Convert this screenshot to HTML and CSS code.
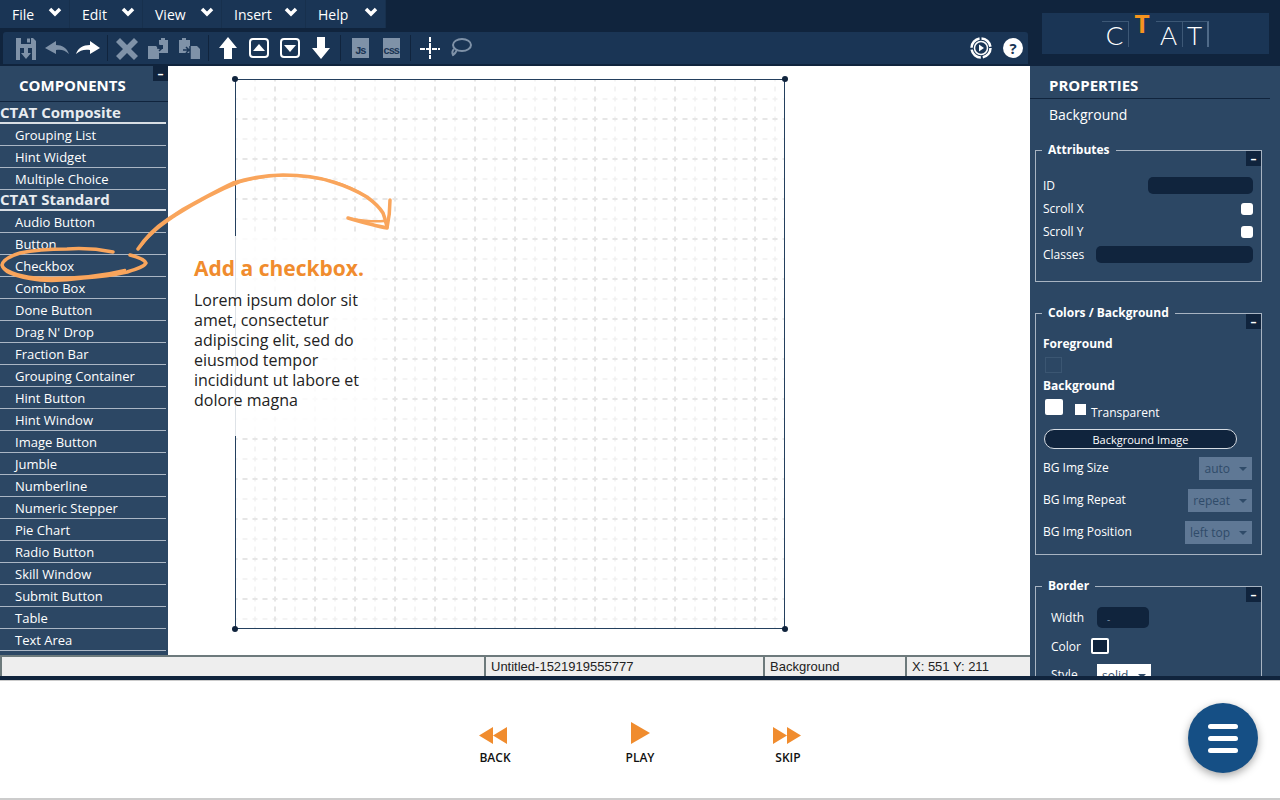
FILE: index.html
```html
<!DOCTYPE html>
<html lang="en">
<head>
  <meta charset="UTF-8" />
  <title>CTAT Tutorial</title>
  <link rel="stylesheet" href="styles.css">
</head>
<body>

  <div class="app">
    <header class="top">
      <div class="bars">
        <nav class="menu">
          <a class="menu-item w-file">File <svg viewBox="0 0 14 10"><path d="M2 2l5 5 5-5" /></svg></a>
          <a class="menu-item w-edit">Edit <svg viewBox="0 0 14 10"><path d="M2 2l5 5 5-5" /></svg></a>
          <a class="menu-item w-view">View <svg viewBox="0 0 14 10"><path d="M2 2l5 5 5-5" /></svg></a>
          <a class="menu-item w-insert">Insert <svg viewBox="0 0 14 10"><path d="M2 2l5 5 5-5" /></svg></a>
          <a class="menu-item w-help">Help <svg viewBox="0 0 14 10"><path d="M2 2l5 5 5-5" /></svg></a>
        </nav>

        <div class="toolbar">
          <div class="tools">
            <svg class="off" viewBox="0 0 24 24"><path d="M2 2h17l3 3v19H2z" /><path class="hole" d="M7 2h10v6H7zM6 12h12v12H6z" /><path d="M13 2.500h3v4h-3zM10 12h4v5h3l-5 6-5-6h3z" /></svg>
            <svg class="off" viewBox="0 0 24 24"><path d="M11 5L0 12l11 6v-4c5-1 9 0 13 4-2-6-7-9-13-9z" /></svg>
            <svg viewBox="0 0 24 24"><path d="M14 5l10 7-10 6v-4C9 13 4 14 0 18 2 12 7 9 14 9z" /></svg>
          </div>
          <div class="tools">
            <svg class="off" viewBox="0 0 24 24"><path d="M5 2l7 7 7-7 4 4-7 7 7 7-4 4-7-7-7 7-4-4 7-7-7-7z" /></svg>
            <svg class="off" viewBox="0 0 24 24"><path d="M13 4h2V2h4v2h3v13H13z" /><path class="hole" d="M11 9h6v4h-6z" /><path d="M2 10h8l3 3v10H2z" /><path class="cut" d="M11 12l3 0M13 9l3 3-3 3" /></svg>
            <svg class="off" viewBox="0 0 24 24"><path d="M2 4h3V2h4v2h4v13H2z" /><path d="M13 10h7l3 3v10H13z" /><path class="cut" d="M6 14h5M9 11l3 3-3 3M13 10v13" /></svg>
          </div>
          <div class="tools">
            <svg viewBox="0 0 24 24"><path d="M12 1l9 11h-5v11H8V12H3z" /></svg>
            <svg viewBox="0 0 24 24"><rect class="frame" x="3" y="3" width="18" height="18" rx="3" /><path d="M12 8l6 7H6z" /></svg>
            <svg viewBox="0 0 24 24"><rect class="frame" x="3" y="3" width="18" height="18" rx="3" /><path d="M12 16l6-7H6z" /></svg>
            <svg viewBox="0 0 24 24"><path d="M12 23l9-11h-5V1H8v11H3z" /></svg>
          </div>
          <div class="tools">
            <span class="file-icon">Js</span>
            <span class="file-icon">css</span>
          </div>
          <div class="tools">
            <svg viewBox="0 0 24 24"><path class="line" d="M2 13h20M12 1v22" stroke-dasharray="5 1" /></svg>
            <svg class="off" viewBox="0 0 24 24"><ellipse class="ring" cx="13" cy="9" rx="9" ry="6" /><path class="ring" d="M8 14c-1 2-2 4-4 5-1-2-1-4 1-6" /></svg>
          </div>
          <div class="toolbar-right">
            <svg viewBox="0 0 24 24"><circle class="ring" cx="12" cy="12" r="9.500" stroke-dasharray="13 2" /><circle cx="12" cy="12" r="6.500" class="ring-thin" /><path d="M10 8.500l5 3.500-5 3.500z" /></svg>
            <span class="help">?</span>
          </div>
        </div>
      </div>

      <div class="logo">
        <span class="logo-cell">C</span>
        <span class="logo-t">T</span>
        <span class="logo-cell">A</span>
        <span class="logo-cell logo-last">T</span>
      </div>
    </header>

    <div class="main">
      <div class="center">
        <div class="center-row">
          <aside class="components">
            <span class="collapse collapse-side">–</span>
            <h2 class="panel-title">COMPONENTS</h2>
            <h3 class="list-head">CTAT Composite</h3>
            <a class="list-item">Grouping List</a>
            <a class="list-item">Hint Widget</a>
            <a class="list-item">Multiple Choice</a>
            <h3 class="list-head list-head-2">CTAT Standard</h3>
            <a class="list-item">Audio Button</a>
            <a class="list-item">Button</a>
            <a class="list-item">Checkbox</a>
            <a class="list-item">Combo Box</a>
            <a class="list-item">Done Button</a>
            <a class="list-item">Drag N' Drop</a>
            <a class="list-item">Fraction Bar</a>
            <a class="list-item">Grouping Container</a>
            <a class="list-item">Hint Button</a>
            <a class="list-item">Hint Window</a>
            <a class="list-item">Image Button</a>
            <a class="list-item">Jumble</a>
            <a class="list-item">Numberline</a>
            <a class="list-item">Numeric Stepper</a>
            <a class="list-item">Pie Chart</a>
            <a class="list-item">Radio Button</a>
            <a class="list-item">Skill Window</a>
            <a class="list-item">Submit Button</a>
            <a class="list-item">Table</a>
            <a class="list-item">Text Area</a>
          </aside>

          <section class="workspace">
            <div class="stage">
              <svg class="grid" width="548" height="548">
                <defs>
                  <pattern id="tile" x="-1" y="-1" width="40" height="40" patternUnits="userSpaceOnUse">
                    <path class="minor" d="M0 20h40M20 0v40" />
                    <path class="major" d="M0 40h40M0 0h40M40 0v40M0 0v40" />
                  </pattern>
                </defs>
                <rect width="548" height="548" fill="url(#tile)" />
              </svg>
              <i class="handle h-tl"></i>
              <i class="handle h-tr"></i>
              <i class="handle h-bl"></i>
              <i class="handle h-br"></i>
            </div>

            <div class="callout">
              <h4>Add a checkbox.</h4>
              <p>Lorem ipsum dolor sit amet, consectetur adipiscing elit, sed do eiusmod tempor incididunt ut labore et dolore magna</p>
            </div>
          </section>
        </div>

        <footer class="status">
          <span class="cell cell-1"></span>
          <span class="cell cell-2">Untitled-1521919555777</span>
          <span class="cell cell-3">Background</span>
          <span class="cell cell-4">X: 551 Y: 211</span>
        </footer>
      </div>

      <aside class="properties">
        <h2 class="panel-title props-title">PROPERTIES</h2>
        <div class="props-name">Background</div>

        <fieldset class="group group-attr">
          <legend>Attributes</legend>
          <span class="collapse">–</span>
          <div class="row"><span>ID</span><i class="field field-id"></i></div>
          <div class="row"><span>Scroll X</span><i class="check"></i></div>
          <div class="row"><span>Scroll Y</span><i class="check"></i></div>
          <div class="row"><span>Classes</span><i class="field field-classes"></i></div>
        </fieldset>

        <fieldset class="group group-colors">
          <legend>Colors / Background</legend>
          <span class="collapse">–</span>
          <div class="sub">Foreground</div>
          <i class="swatch swatch-fg"></i>
          <div class="sub sub-bg">Background</div>
          <div class="bg-row">
            <i class="swatch swatch-bg"></i>
            <i class="tick"></i>
            <span>Transparent</span>
          </div>
          <button class="pill" type="button">Background Image</button>
          <div class="row row-select"><span class="select-label">BG Img Size</span><span class="select">auto</span></div>
          <div class="row row-select"><span class="select-label">BG Img Repeat</span><span class="select">repeat</span></div>
          <div class="row row-select"><span class="select-label">BG Img Position</span><span class="select">left top</span></div>
        </fieldset>

        <fieldset class="group group-border">
          <legend>Border</legend>
          <span class="collapse">–</span>
          <div class="border-row"><span class="border-label">Width</span><i class="field field-width">-</i></div>
          <div class="border-row border-row-color"><span class="border-label">Color</span><i class="swatch-dark"></i></div>
          <div class="border-row border-row-style"><span class="border-label">Style</span><span class="select select-white">solid</span></div>
        </fieldset>
      </aside>
    </div>
  </div>

  <div class="player">
    <a class="ctrl ctrl-back">
      <svg width="28" height="17" viewBox="0 0 28 17"><path d="M14 0v17L0 8.500zM28 0v17L14 8.500z" /></svg>
      <span>BACK</span>
    </a>
    <a class="ctrl ctrl-play">
      <svg width="19" height="22" viewBox="0 0 19 22"><path d="M0 0l19 11L0 22z" /></svg>
      <span>PLAY</span>
    </a>
    <a class="ctrl ctrl-skip">
      <svg width="28" height="17" viewBox="0 0 28 17"><path d="M0 0v17l14-8.500zM14 0v17l14-8.500z" /></svg>
      <span>SKIP</span>
    </a>
    <button class="burger" type="button"><i></i><i></i><i></i></button>
  </div>

  <svg class="scribble" width="400" height="290" viewBox="0 0 400 290">
    <path d="M138 249C146 237 155 228 167 220C178 212 188 206 200 200C211 194 222 188 233 183C250 178 266 175 283 175C300 175 318 177 333 182C346 186 357 191 367 197C375 203 380 208 383 213C385 218 386 223 387 227" />
    <path class="rough" d="M140 247C150 233 162 225 175 216C195 203 215 192 240 182C262 176 285 173 310 177C335 180 355 188 372 201" />
    <path d="M348 218C362 222 376 226 387 228C389 219 390 209 390 200" />
    <path class="rough" d="M352 219C364 221 374 222 384 221" />
    <path d="M113 252C98 249 82 248 67 249C50 249 34 250 20 253C10 256 3 260 2 265C3 269 6 271 10 273C19 277 29 279 40 280C54 281 69 280 83 278C99 277 114 275 127 272C137 269 144 267 146 263C145 260 138 257 130 255" />
    <path class="rough" d="M4 268C14 275 30 278 50 278C75 278 105 275 125 270" />
  </svg>

</body>
</html>
```

FILE: styles.css
```css
* {
  box-sizing: border-box;
}

body {
  font-family: "Open Sans", Arial, sans-serif;
  margin: 0;
  height: 800px;
  overflow: hidden;
  background-color: white;
  position: relative;
}

.app {
  height: 681px;
  background-color: #10243d;
  border-bottom: 1px solid #ccc;
  display: flex;
  flex-direction: column;
}

/* top bars */
.top {
  height: 66px;
  display: flex;
  flex: none;
}

.bars {
  width: 1028px;
}

.menu {
  width: 386px;
  height: 28px;
  background-color: #1a3555;
  display: flex;
}

.menu-item {
  color: white;
  font-size: 14px;
  padding: 0 7px 0 12px;
  display: flex;
  align-items: center;
  justify-content: space-between;
  border-right: 1px solid #17304d;
}

.menu-item svg {
  width: 14px;
  height: 10px;
  margin-top: -4px;
  fill: none;
  stroke: white;
  stroke-width: 3.500;
}

.w-file { width: 70px; }
.w-edit { width: 73px; }
.w-view { width: 79px; }
.w-insert { width: 84px; }
.w-help { width: 80px; }

.toolbar {
  margin: 4px 0 0 3px;
  height: 32px;
  background-color: #1a3555;
  display: flex;
  align-items: center;
  padding-left: 11px;
  border-radius: 3px 3px 0 0;
}

.tools {
  display: flex;
  gap: 7px;
  align-items: center;
  padding-right: 7px;
  margin-right: 7px;
  border-right: 1px solid #10243d;
  height: 26px;
}

.tools:nth-child(5) {
  border-right: none;
}

.tools svg,
.toolbar-right svg {
  width: 24px;
  height: 24px;
  fill: white;
}

.tools svg.off {
  fill: #7f92a8;
}

.tools svg .hole {
  fill: #1a3555;
}

.cut {
  fill: none;
  stroke: #1a3555;
  stroke-width: 1.500;
}

.frame {
  fill: #1a3555;
  stroke: white;
  stroke-width: 2;
}

.line {
  fill: none;
  stroke: white;
  stroke-width: 2;
}

.ring {
  fill: none;
  stroke: #7f92a8;
  stroke-width: 2;
}

.toolbar-right .ring {
  stroke: white;
  stroke-width: 2.500;
}

.ring-thin {
  fill: none;
  stroke: white;
  stroke-width: 1.500;
}

.file-icon {
  width: 17px;
  height: 20px;
  margin: 0 3.500px;
  background-color: #7f92a8;
  color: #1a3555;
  font: bold 11px "Liberation Mono", monospace;
  line-height: 26px;
  text-align: center;
  letter-spacing: -1.500px;
}

.toolbar-right {
  margin-left: auto;
  margin-right: 5px;
  display: flex;
  align-items: center;
  gap: 10px;
}

.help {
  width: 20px;
  height: 20px;
  border-radius: 50%;
  background-color: white;
  color: #1a3555;
  font-weight: bold;
  font-size: 15px;
  line-height: 20px;
  text-align: center;
}

.logo {
  margin: 13px 0 0 14px;
  width: 227px;
  height: 41px;
  background-color: #1a3555;
  display: flex;
  justify-content: center;
  align-items: flex-end;
  padding: 0 1px 7px 0;
  color: white;
  font-family: Lato, sans-serif;
  font-weight: 300;
  font-size: 26px;
  line-height: 26px;
}

.logo-cell {
  width: 27px;
  height: 26px;
  text-align: center;
  border-right: 1px solid #3d5876;
  border-top: 1px solid #3d5876;
}

.logo-last {
  border-right: 2px solid #4f6a88;
  width: 26px;
}

.logo-t {
  width: 27px;
  height: 26px;
  color: #f7941e;
  font-weight: 900;
  font-size: 25px;
  line-height: 14px;
  text-align: center;
  align-self: flex-start;
  padding-top: 3px;
}

/* main area */
.main {
  flex: 1;
  display: flex;
  min-height: 0;
}

.center {
  width: 1030px;
  height: 610px;
  display: flex;
  flex-direction: column;
}

.center-row {
  height: 589px;
  display: flex;
}

.components {
  width: 168px;
  background-color: #2c4764;
  color: white;
  overflow: hidden;
  position: relative;
}

.panel-title {
  margin: 0;
  font-size: 15px;
  font-weight: bold;
  line-height: 20px;
}

.components .panel-title {
  height: 36px;
  padding: 9px 0 0 19px;
  border-bottom: 1px solid #10243d;
}

.list-head {
  margin: 0 2px 0 0;
  height: 22px;
  font-size: 15px;
  font-weight: bold;
  line-height: 20px;
  color: #e8ecf0;
  border-bottom: 2px solid #d8dee4;
}

.list-head-2 {
  height: 21px;
  line-height: 18px;
}

.list-item {
  display: block;
  height: 22px;
  margin-right: 2px;
  padding-left: 15px;
  font-size: 13px;
  line-height: 22px;
  border-bottom: 1px solid #aab6c4;
}

.collapse {
  position: absolute;
  top: 1px;
  right: 1px;
  width: 15px;
  height: 15px;
  background-color: #10243d;
  color: white;
  font-size: 12px;
  font-weight: bold;
  line-height: 15px;
  text-align: center;
}

.collapse-side {
  top: 0;
  right: 0;
}

.workspace {
  flex: 1;
  background-color: white;
  padding: 13px 0 0 67px;
  position: relative;
}

.stage {
  width: 550px;
  height: 550px;
  border: 1px solid #24405e;
  position: relative;
}

.grid {
  display: block;
}

.minor {
  fill: none;
  stroke: #f1f1f1;
  stroke-width: 1.500;
  stroke-dasharray: 5 5;
  stroke-dashoffset: 2.500;
}

.major {
  fill: none;
  stroke: #e6e6e6;
  stroke-width: 2;
  stroke-dasharray: 5 5;
  stroke-dashoffset: 2.500;
}

.handle {
  position: absolute;
  width: 6px;
  height: 6px;
  border-radius: 50%;
  background-color: #10243d;
}

.h-tl { top: -4px; left: -4px; }
.h-tr { top: -4px; right: -4px; }
.h-bl { bottom: -4px; left: -4px; }
.h-br { bottom: -4px; right: -4px; }

.callout {
  position: absolute;
  top: 170px;
  left: 0;
  width: 226px;
  height: 200px;
  padding: 19px 30px 0 26px;
  background: linear-gradient(to right, rgba(255,255,255,0.85) 88%, rgba(255,255,255,0));
}

.callout h4 {
  margin: 0 0 9px;
  font-size: 21px;
  line-height: 26px;
  font-weight: bold;
  color: #f08c2e;
}

.callout p {
  margin: 0;
  font-size: 16px;
  line-height: 20px;
  color: #222;
}

.status {
  height: 21px;
  display: flex;
  background-color: #eee;
  border-top: 2px solid #6d7a7c;
  font-family: "Liberation Sans", Arial, sans-serif;
  font-size: 13px;
  line-height: 20px;
  color: #222;
}

.cell {
  padding-left: 5px;
  border-left: 2px solid #6d7a7c;
}

.cell-1 { width: 484px; }
.cell-2 { width: 279px; }
.cell-3 { width: 142px; }
.cell-4 { width: 125px; }

.properties {
  width: 250px;
  height: 610px;
  overflow: hidden;
  background-color: #2c4764;
  color: white;
  font-size: 12px;
}

.props-title {
  width: 240px;
  height: 33px;
  padding: 9px 0 0 19px;
  border-bottom: 1px solid #10243d;
}

.props-name {
  height: 29px;
  padding-left: 19px;
  font-size: 14px;
  line-height: 32px;
}

.group {
  position: relative;
  margin: 14px 0 0 5px;
  width: 227px;
  padding: 0 8px 0 7px;
  border: 1px solid #a8b4c2;
  min-width: 0;
}

.group legend {
  margin-left: -1px;
  padding: 0 6px;
  font-size: 12px;
  font-weight: bold;
  line-height: 16px;
}

.group .collapse {
  top: -7px;
  right: 0;
}

.group-attr {
  height: 140px;
  padding-top: 16px;
}

.group-colors {
  margin-top: 23px;
  height: 250px;
  padding-top: 14px;
}

.group-border {
  margin-top: 23px;
  height: 200px;
  padding-top: 13px;
}

.row {
  height: 23px;
  display: flex;
  justify-content: space-between;
  align-items: center;
}

.field {
  display: block;
  height: 17px;
  background-color: #10243d;
  border-radius: 5px;
}

.field-id { width: 105px; }
.field-classes { width: 157px; }

.field-width {
  width: 52px;
  height: 21px;
  margin-left: 14px;
  font-style: normal;
  font-size: 10px;
  line-height: 24px;
  padding-left: 10px;
  color: #7f92a8;
}

.check {
  width: 12px;
  height: 12px;
  background-color: white;
  border-radius: 3px;
}

.sub {
  font-weight: bold;
  height: 17px;
  line-height: 17px;
}

.sub-bg {
  margin-top: 4px;
}

.swatch {
  display: block;
}

.swatch-fg {
  width: 17px;
  height: 16px;
  margin: 5px 0 0 2px;
  border: 1px solid #3b5672;
}

.bg-row {
  display: flex;
  align-items: flex-start;
  margin-top: 5px;
  height: 30px;
}

.swatch-bg {
  width: 18px;
  height: 16px;
  margin-left: 2px;
  background-color: white;
  border-radius: 2px;
}

.tick {
  width: 11px;
  height: 11px;
  margin: 5px 5px 0 12px;
  background-color: white;
}

.bg-row span {
  line-height: 17px;
  margin-top: 5px;
}

.pill {
  display: block;
  width: 193px;
  height: 20px;
  margin-left: 1px;
  padding: 0;
  background-color: #10243d;
  border: 1px solid #d5dbe2;
  border-radius: 10px;
  color: white;
  font-family: "Open Sans", Arial, sans-serif;
  font-size: 11px;
}

.row-select {
  margin-top: 8px;
  height: 23px;
  padding-right: 1px;
}

.row-select + .row-select {
  margin-top: 9px;
}

.select-label {
  margin-top: -2px;
}

.select {
  height: 23px;
  padding: 0 22px 0 5px;
  background-color: #5f7895;
  color: #2f4b69;
  line-height: 23px;
  position: relative;
}

.select::after {
  content: "";
  position: absolute;
  right: 5px;
  top: 10px;
  border-left: 4px solid transparent;
  border-right: 4px solid transparent;
  border-top: 4px solid #2f4b69;
}

.select-white {
  display: block;
  width: 54px;
  background-color: white;
  margin-left: 14px;
}

.border-row {
  display: flex;
  align-items: center;
  padding-left: 8px;
  height: 21px;
}

.border-row-color {
  margin-top: 10px;
  height: 16px;
}

.border-row-style {
  margin-top: 10px;
  height: 23px;
}

.border-label {
  width: 32px;
}

.border-row-style .border-label {
  margin-top: -3px;
}

.swatch-dark {
  width: 18px;
  height: 16px;
  margin-left: 8px;
  background-color: #10243d;
  border: 2px solid white;
  border-radius: 2px;
}

/* bottom player */
.player {
  height: 119px;
  border-bottom: 2px solid #ccc;
  display: flex;
  align-items: flex-start;
  padding-left: 465px;
}

.ctrl {
  width: 60px;
  height: 60px;
  margin-top: 25px;
  display: flex;
  flex-direction: column;
  align-items: center;
  justify-content: flex-end;
  gap: 6px;
  font-size: 12px;
  font-weight: 600;
  line-height: 16px;
  color: #111;
}

.ctrl svg {
  fill: #f08c2e;
}

.ctrl-back svg { margin-right: 4px; }
.ctrl-skip svg { margin-right: 2px; }

.ctrl-play { margin-left: 85px; }
.ctrl-skip { margin-left: 88px; }

.burger {
  width: 70px;
  height: 70px;
  margin: 22px 22px 0 auto;
  padding: 0;
  border: none;
  border-radius: 50%;
  background-color: #154f85;
  box-shadow: 0 3px 8px rgba(0,0,0,0.35);
  display: flex;
  flex-direction: column;
  align-items: center;
  justify-content: center;
  gap: 7px;
}

.burger i {
  width: 30px;
  height: 5px;
  border-radius: 3px;
  background-color: white;
}

.scribble {
  position: absolute;
  top: 0;
  left: 0;
  fill: none;
  stroke: #f9a55c;
  stroke-width: 3.500;
  stroke-linecap: round;
  stroke-linejoin: round;
}

.scribble .rough {
  stroke-width: 2.500;
}
```
